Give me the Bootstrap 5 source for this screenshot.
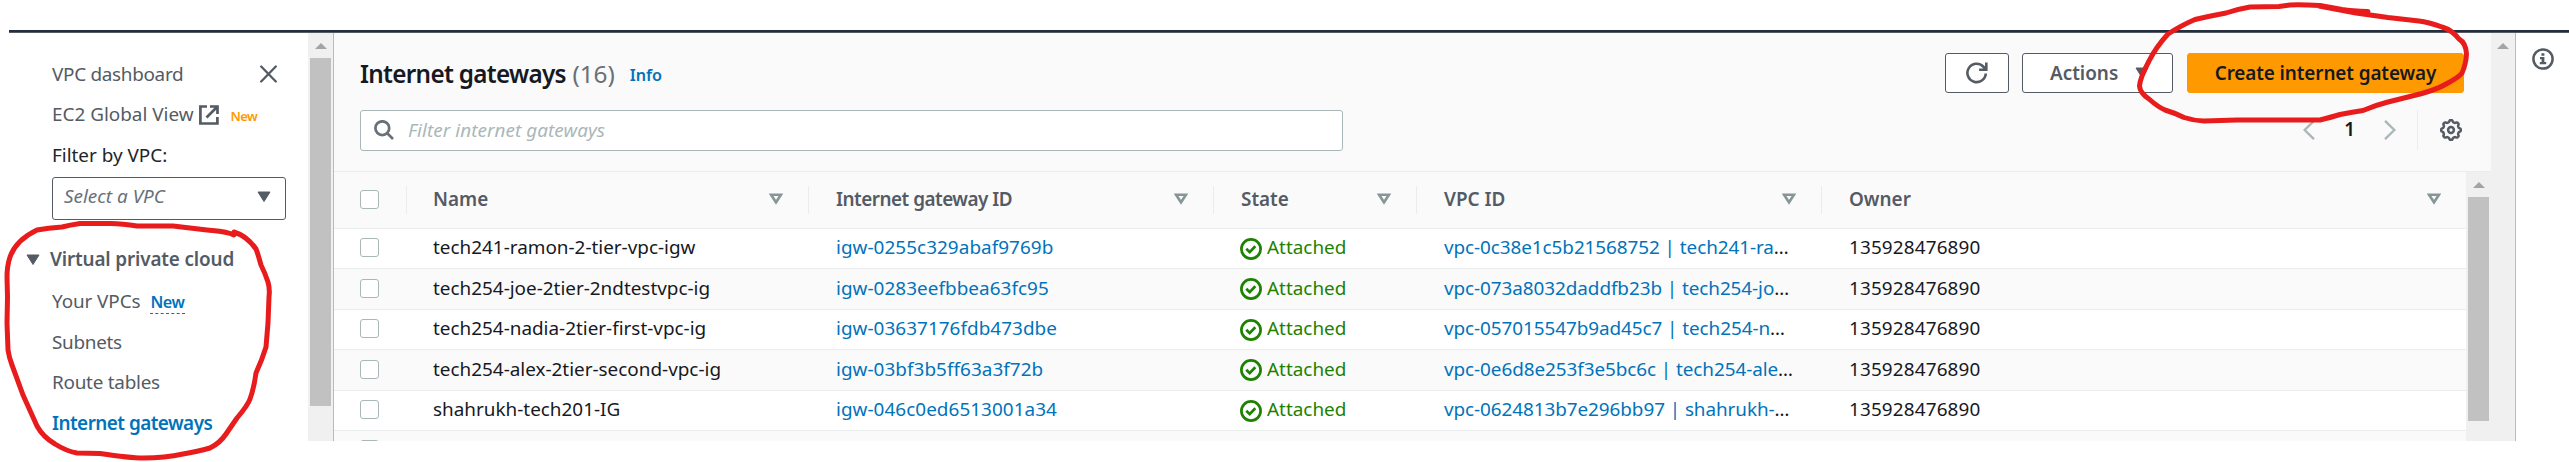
<!DOCTYPE html>
<html lang="en">
<head>
<meta charset="utf-8">
<title>Internet gateways</title>
<link href="https://cdn.jsdelivr.net/npm/bootstrap@5.3.0/dist/css/bootstrap.min.css" rel="stylesheet">
<script src="https://cdn.jsdelivr.net/npm/bootstrap@5.3.0/dist/js/bootstrap.bundle.min.js"></script>
<style>
body{font-family:"Noto Sans","Open Sans",sans-serif;font-size:18.9px;line-height:27px;color:#16191f;background:#fff;height:462px;overflow:hidden}
.console{margin-left:9px;padding-top:30px;height:441px}
.topline{height:2px;background:#232f3e;border-bottom:1px solid #545b64;box-sizing:content-box}
.side{width:299px;padding:21px 0 0 43px;color:#545b64}
.side a{color:inherit;text-decoration:none}
.item{height:40.5px}
.semi{font-weight:600}
.blue{color:#0073bb!important}
.newtag{font-size:13px;color:#ff9900;letter-spacing:-.6px;margin-left:12px;padding-top:3px}
.newlink{font-size:16.2px;line-height:21px;letter-spacing:-.4px;border-bottom:1px dashed #0073bb;margin-left:10px;margin-top:2px}
.pick{width:234px;height:43px;border:1px solid #545b64;border-radius:3px;padding:0 14px 3px 11px;margin-top:1px;color:#687078;font-style:italic}
.grp{height:40px;margin:20px 0 2px -31px}
.sbar{width:25px;background:#f0f0f0}
.sbar svg{display:block;margin:10px auto 9px}
.thumb{background:#c1c1c1;width:21px;margin-left:2px}
.rule{width:1px;background:#b5bdbd}
.toolbar{height:139px;background:#fafafa;border-bottom:1px solid #eaeded;padding:20px 27px 0 26px}
h1{font-size:24.3px;line-height:30px;font-weight:600;letter-spacing:-.7px}
h1 .count{font-weight:400;color:#687078;letter-spacing:0;margin-left:1px}
.info{font-size:16.2px;margin-left:15px;padding-top:3px}
.find{width:983px;height:41px;background:#fff;border:1px solid #aab7b8;border-radius:3px;padding:0 13px 1px;color:#aab7b8;font-style:italic;letter-spacing:.05px}
.abtn{height:40px;border:1px solid #545b64;border-radius:3px;background:#fff;color:#545b64;font-size:18.9px;line-height:27px;font-weight:600;padding:0}
.abtn.main{background:#ff9900;border-color:#ff9900;color:#16191f;width:277px;letter-spacing:-.1px}
.vline{width:1px;background:#eaeded}
.line{height:40px;border-bottom:1px solid #eaeded;background:#fff}
.body-rows .line:nth-child(even){height:41px;background:#fafafa}
.line.heads{height:57px;background:#fafafa;color:#545b64;font-weight:600}
.c0{width:73px}.c1{width:402px}.c2{width:405px}.c3{width:203px}.c4{width:405px}
.cell{padding-left:26px;flex:none;padding-bottom:2px}
.cell.c5{flex:1}
.heads .cell{padding-right:25px}
.heads .c0{padding-right:0}
.heads .c0,.heads .c1,.heads .c2,.heads .c3,.heads .c4{border-right:1px solid #eaeded;height:28px}
.cell.c2,.cell.c3,.cell.c4,.cell.c5{padding-left:27px}
.tick{width:19px;height:19px;border:1px solid #aab7b8;border-radius:3px;background:#fff;display:block}
.c2 a,.c4 a{color:#0073bb;text-decoration:none}
.c4 a{letter-spacing:-.07px}
.c2{letter-spacing:.05px}.heads .c2{letter-spacing:-.5px}
.body-rows .c5{letter-spacing:.15px}
.ok{color:#1d8102}
.right{width:53px;padding:15px 0 0 16px}
.scribble{left:0;top:0;z-index:5;pointer-events:none}
</style>
</head>
<body class="position-relative">
<svg width="0" height="0" class="position-absolute">
  <symbol id="sort" viewBox="0 0 14 12"><path d="M2 1.7h10L7 9.3z" fill="none" stroke="#879596" stroke-width="2.6"/></symbol>
  <symbol id="down" viewBox="0 0 14 12"><path d="M1 1h12L7 10.5z" fill="#545b64" stroke="#545b64" stroke-linejoin="round"/></symbol>
  <symbol id="up" viewBox="0 0 12 6"><path d="M0 6 6 0l6 6z" fill="#a3a3a3"/></symbol>
  <symbol id="ok" viewBox="0 0 22 22"><circle cx="11" cy="11" r="9.6" fill="none" stroke="#1d8102" stroke-width="2.7"/><path d="m6.3 10.7 3.4 3.4 5.6-5.9" fill="none" stroke="#1d8102" stroke-width="2.7"/></symbol>
</svg>
<div class="console d-flex flex-column overflow-hidden">
  <div class="topline flex-shrink-0"></div>
  <div class="d-flex flex-grow-1">
    <nav class="side flex-shrink-0">
      <div class="item d-flex align-items-center" style="letter-spacing:-.3px"><a href="#">VPC dashboard</a>
        <svg class="ms-auto" style="margin-right:31px" width="17" height="18" viewBox="0 0 17 18" fill="none" stroke="#545b64" stroke-width="2.3" stroke-linecap="round"><path d="m1.2 1.5 14.6 15M15.8 1.5l-14.6 15"/></svg></div>
      <div class="item d-flex align-items-center"><a href="#">EC2 Global View</a>
        <svg style="margin-left:5px" width="20" height="20" viewBox="0 0 20 20" fill="none" stroke="#545b64" stroke-width="2.7"><path d="M8 1.5H1.4v17h17V12M11 1.5h7.5V9M18 2 7.5 12.5"/></svg>
        <span class="newtag semi">New</span></div>
      <div class="item d-flex align-items-center text-dark">Filter by VPC:</div>
      <div class="pick d-flex align-items-center justify-content-between">Select a VPC<svg width="14" height="12"><use href="#down"/></svg></div>
      <div class="grp d-flex align-items-center semi"><svg style="margin:0 10px 0 5px" width="14" height="12"><use href="#down"/></svg><span style="letter-spacing:-.15px">Virtual private cloud</span></div>
      <div class="item d-flex align-items-center"><a href="#" style="letter-spacing:-.1px">Your VPCs</a><a href="#" class="newlink semi blue">New</a></div>
      <div class="item d-flex align-items-center" style="letter-spacing:-.3px"><a href="#">Subnets</a></div>
      <div class="item d-flex align-items-center" style="letter-spacing:-.25px"><a href="#">Route tables</a></div>
      <div class="item d-flex align-items-center" style="letter-spacing:-.53px"><a href="#" class="semi blue">Internet gateways</a></div>
    </nav>
    <div class="sbar flex-shrink-0"><svg width="12" height="6"><use href="#up"/></svg><div class="thumb" style="height:348px"></div></div>
    <div class="rule"></div>
    <main class="flex-grow-1 d-flex flex-column">
      <div class="toolbar flex-shrink-0">
        <div class="d-flex justify-content-between">
          <div class="d-flex align-items-center" style="height:42px"><h1 class="mb-0">Internet gateways <span class="count">(16)</span></h1><a href="#" class="info semi blue text-decoration-none">Info</a></div>
          <div class="d-flex">
            <button class="abtn d-flex align-items-center justify-content-center" style="width:64px;margin-right:13px"><svg width="22" height="22" viewBox="0 0 22 22" fill="none" stroke="#545b64" stroke-width="2.6"><path d="M19.8 11.5a9.2 9.2 0 1 1-2.6-7L20 7.2M20.3.6v7.2h-7.2"/></svg></button>
            <button class="abtn d-flex align-items-center" style="width:151px;margin-right:14px;padding-left:27px">Actions<svg style="margin-left:17px" width="14" height="12"><use href="#down"/></svg></button>
            <button class="abtn main">Create internet gateway</button>
          </div>
        </div>
        <div class="d-flex justify-content-between" style="padding-top:15px">
          <div class="find d-flex align-items-center"><svg style="margin-right:14px" width="20" height="20" viewBox="0 0 20 20" fill="none" stroke="#687078" stroke-width="2.7"><circle cx="8.3" cy="8.2" r="6.9"/><path d="m13 13 6 6"/></svg><span>Filter internet gateways</span></div>
          <div class="d-flex align-items-center" style="height:40px;padding-right:2px">
            <svg width="12" height="20" viewBox="0 0 12 20" fill="none" stroke="#aab7b8" stroke-width="2.4"><path d="M11 .8 1.6 10l9.4 9.2"/></svg>
            <span class="semi" style="margin:0 29px;padding-bottom:2px">1</span>
            <svg width="12" height="20" viewBox="0 0 12 20" fill="none" stroke="#aab7b8" stroke-width="2.4"><path d="M1 .8 10.4 10 1 19.2"/></svg>
            <span class="vline align-self-stretch" style="margin:0 22px 0 21px"></span>
            <svg width="22" height="22" viewBox="-11 -11 22 22" fill="none" stroke="#545b64" stroke-width="2.5"><circle r="2.9"/><path id="gear" stroke-linejoin="round"/></svg>
          </div>
        </div>
      </div>
      <div class="d-flex flex-grow-1">
        <div class="flex-grow-1 overflow-hidden" style="height:269px">
          <div class="line heads d-flex align-items-center">
            <div class="cell c0 d-flex align-items-center"><span class="tick"></span></div>
            <div class="cell c1 d-flex align-items-center justify-content-between">Name<svg width="14" height="12"><use href="#sort"/></svg></div>
            <div class="cell c2 d-flex align-items-center justify-content-between">Internet gateway ID<svg width="14" height="12"><use href="#sort"/></svg></div>
            <div class="cell c3 d-flex align-items-center justify-content-between">State<svg width="14" height="12"><use href="#sort"/></svg></div>
            <div class="cell c4 d-flex align-items-center justify-content-between">VPC ID<svg width="14" height="12"><use href="#sort"/></svg></div>
            <div class="cell c5 d-flex align-items-center justify-content-between">Owner<svg width="14" height="12"><use href="#sort"/></svg></div>
          </div>
          <div class="body-rows" id="rows"></div>
        </div>
        <div class="sbar flex-shrink-0"><svg width="12" height="6"><use href="#up"/></svg><div class="thumb" style="height:224px"></div></div>
      </div>
    </main>
    <div class="sbar flex-shrink-0" style="width:24px"><svg width="12" height="6"><use href="#up"/></svg></div>
    <div class="rule"></div>
    <aside class="right flex-shrink-0"><svg class="d-block" width="22" height="22" viewBox="0 0 22 22"><circle cx="11" cy="11" r="9.6" fill="none" stroke="#545b64" stroke-width="2.5"/><path d="M9.4 5.2h3v2.6h-3zM8 9h4.4v5h1.8v2.2H7.8V14h1.8v-2.8H8z" fill="#545b64"/></svg></aside>
  </div>
</div>
<!-- hand-drawn highlights -->
<svg class="scribble position-absolute" width="2569" height="462" fill="none" stroke="#e81c1c" stroke-width="5" stroke-linejoin="round" stroke-linecap="round">
  <path d="M234 235C226 231 217 231 207 230L173 226L137 226Q120 223 107 223.500L80 223.500Q70 225 62 227Q48 228 37 230Q16 240 10 257Q7 266 7 277L7.500 297L7 323L8 350Q9 357 12 365L23 395L37 426Q43 437 55 444Q66 451 77 453L100 453.500Q130 458 143 458Q165 458 183 454Q200 451 210 448Q220 443 226 434L237 418Q248 405 250 399Q254 388 256 373Q262 360 266 347L268 323L269 297Q270 289 268 282Q265 273 261 265Q258 254 256 249Q247 236 234 232"/>
  <path d="M2368 11.500Q2352 11 2342 9.500L2320 5.500Q2300 4.500 2290 5L2279 6.500L2250 7Q2238 9 2226 13Q2210 16 2195 19.500Q2182 25 2168 34Q2156 47 2149 61Q2140 78 2139.500 86Q2140 93 2149 99Q2158 107 2165 110Q2175 113 2184 117.500Q2193 120.500 2204 121L2237 120H2320Q2332 117 2340 114.500Q2353 112 2363 110.500Q2376 105 2388 102L2408 97Q2435 91 2448 83Q2459 77 2462 73Q2466 64 2466.500 54Q2466 43 2459 39Q2452 30 2442 27Q2428 22 2419 21L2388 17.500L2356 13L2319 6"/>
</svg>
<script>
const data = [
  ["tech241-ramon-2-tier-vpc-igw","igw-0255c329abaf9769b","vpc-0c38e1c5b21568752 | tech241-ra"],
  ["tech254-joe-2tier-2ndtestvpc-ig","igw-0283eefbbea63fc95","vpc-073a8032daddfb23b | tech254-jo"],
  ["tech254-nadia-2tier-first-vpc-ig","igw-03637176fdb473dbe","vpc-057015547b9ad45c7 | tech254-n"],
  ["tech254-alex-2tier-second-vpc-ig","igw-03bf3b5ff63a3f72b","vpc-0e6d8e253f3e5bc6c | tech254-ale"],
  ["shahrukh-tech201-IG","igw-046c0ed6513001a34","vpc-0624813b7e296bb97 | shahrukh-"]
];
const rows = document.getElementById("rows");
rows.innerHTML = data.map(([n,g,v]) => `<div class="line d-flex align-items-center">
  <div class="cell c0"><span class="tick"></span></div><div class="cell c1">${n}</div>
  <div class="cell c2"><a href="#">${g}</a></div>
  <div class="cell c3 ok d-flex align-items-center"><svg width="22" height="22" style="margin:2px 5px 0 -1px"><use href="#ok"/></svg>Attached</div>
  <div class="cell c4 text-nowrap"><a href="#">${v}</a>…</div>
  <div class="cell c5">135928476890</div></div>`).join("") +
  `<div class="line d-flex align-items-start"><div class="cell c0" style="padding-top:9px"><span class="tick"></span></div></div>`;
// gear outline: eight rounded teeth
let d = "";
for (let i = 0; i <= 120; i++) {
  const a = i / 120 * 2 * Math.PI, r = 8.9 + .95 * Math.tanh(2 * Math.cos(8 * a));
  d += (i ? "L" : "M") + (r * Math.cos(a)).toFixed(2) + " " + (r * Math.sin(a)).toFixed(2);
}
document.getElementById("gear").setAttribute("d", d + "z");
</script>
</body>
</html>
